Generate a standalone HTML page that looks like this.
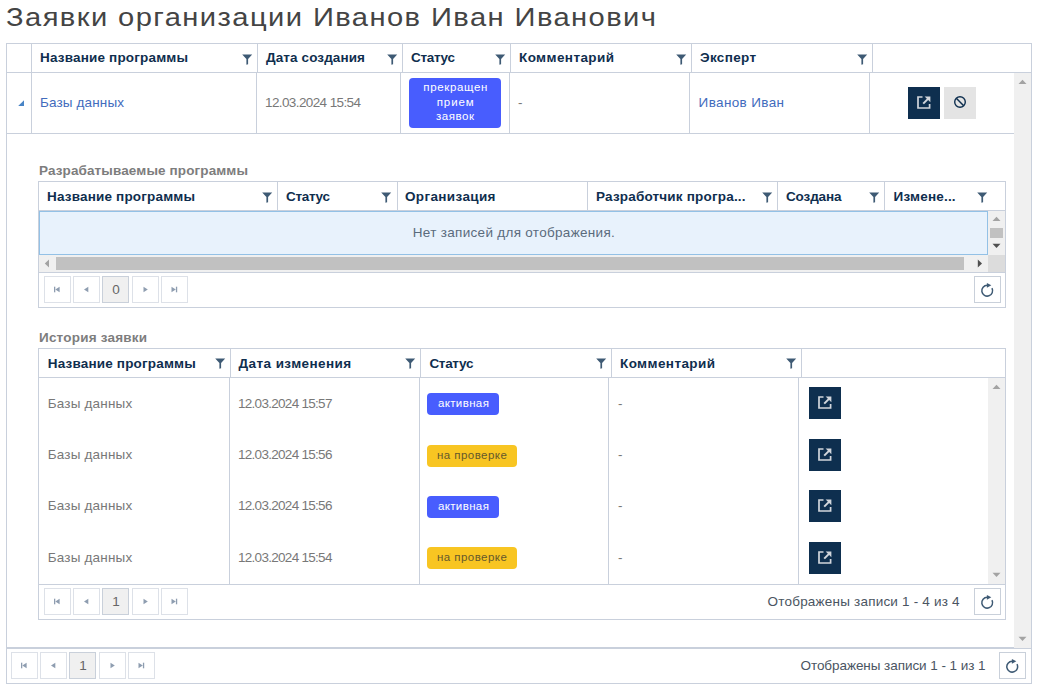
<!DOCTYPE html><html><head><meta charset="utf-8"><style>html,body{margin:0;padding:0;background:#fff;width:1041px;height:696px;overflow:hidden;position:relative;font-family:"Liberation Sans", sans-serif}
.t{position:absolute;white-space:nowrap;font-family:"Liberation Sans", sans-serif}</style></head><body><div style="position:absolute;left:6px;top:43px;width:1026px;height:641px;border:1px solid #c9d0dc;box-sizing:border-box;background:#fff"></div><div style="position:absolute;left:6px;top:72px;width:1026px;height:1px;background:#c9d0dc"></div><div style="position:absolute;left:31px;top:43px;width:1px;height:30px;background:#c9d0dc"></div><div style="position:absolute;left:257px;top:43px;width:1px;height:30px;background:#c9d0dc"></div><div style="position:absolute;left:402px;top:43px;width:1px;height:30px;background:#c9d0dc"></div><div style="position:absolute;left:510px;top:43px;width:1px;height:30px;background:#c9d0dc"></div><div style="position:absolute;left:691px;top:43px;width:1px;height:30px;background:#c9d0dc"></div><div style="position:absolute;left:872px;top:43px;width:1px;height:30px;background:#c9d0dc"></div><svg style="position:absolute;left:242px;top:53.6px" width="11" height="11" viewBox="0 0 11 11"><path d="M0.2 0.4 H10.2 L6.1 4.9 V10.2 L4.4 10.8 V4.9 Z" fill="#3e5a74"/></svg><svg style="position:absolute;left:495px;top:53.6px" width="11" height="11" viewBox="0 0 11 11"><path d="M0.2 0.4 H10.2 L6.1 4.9 V10.2 L4.4 10.8 V4.9 Z" fill="#3e5a74"/></svg><svg style="position:absolute;left:676px;top:53.6px" width="11" height="11" viewBox="0 0 11 11"><path d="M0.2 0.4 H10.2 L6.1 4.9 V10.2 L4.4 10.8 V4.9 Z" fill="#3e5a74"/></svg><svg style="position:absolute;left:857px;top:53.6px" width="11" height="11" viewBox="0 0 11 11"><path d="M0.2 0.4 H10.2 L6.1 4.9 V10.2 L4.4 10.8 V4.9 Z" fill="#3e5a74"/></svg><svg style="position:absolute;left:387px;top:53.6px" width="11" height="11" viewBox="0 0 11 11"><path d="M0.2 0.4 H10.2 L6.1 4.9 V10.2 L4.4 10.8 V4.9 Z" fill="#3e5a74"/></svg><div style="position:absolute;left:1014px;top:73px;width:17px;height:575px;background:#f0f0f0"></div><svg style="position:absolute;left:1018px;top:79px" width="9" height="6"><path d="M0.5 5 L4.5 0.8 L8.5 5 Z" fill="#a3a3a3"/></svg><svg style="position:absolute;left:1018px;top:636px" width="9" height="6"><path d="M0.5 0.8 L4.5 5 L8.5 0.8 Z" fill="#a3a3a3"/></svg><div style="position:absolute;left:31px;top:73px;width:1px;height:61px;background:#c9d0dc"></div><div style="position:absolute;left:256px;top:73px;width:1px;height:61px;background:#c9d0dc"></div><div style="position:absolute;left:400px;top:73px;width:1px;height:61px;background:#c9d0dc"></div><div style="position:absolute;left:509px;top:73px;width:1px;height:61px;background:#c9d0dc"></div><div style="position:absolute;left:689px;top:73px;width:1px;height:61px;background:#c9d0dc"></div><div style="position:absolute;left:869px;top:73px;width:1px;height:61px;background:#c9d0dc"></div><div style="position:absolute;left:6px;top:133px;width:1008px;height:1px;background:#c9d0dc"></div><svg style="position:absolute;left:18px;top:100px" width="7" height="7"><path d="M6 0.2 V6 H0.2 Z" fill="#4884c6"/></svg><div style="position:absolute;left:409px;top:78px;width:92px;height:50px;background:#485dfe;border-radius:4px"></div><div style="position:absolute;left:908px;top:87px;width:32px;height:32px;background:#0e2f4f"></div><svg style="position:absolute;left:908px;top:87px" width="32" height="32" viewBox="0 0 32 32"><path d="M14.5 10.0 H10 V21.0 H21.6 V17" fill="none" stroke="#d2d6dc" stroke-width="1.7"/><path d="M15.2 16.6 L20.2 11.6" stroke="#d2d6dc" stroke-width="2"/><path d="M16.6 9.4 H22.4 V15.2 Z" fill="#d2d6dc"/></svg><div style="position:absolute;left:944px;top:87px;width:32px;height:32px;background:#e4e4e4"></div><svg style="position:absolute;left:944px;top:87px" width="32" height="32" viewBox="0 0 32 32"><circle cx="16" cy="15" r="5.3" fill="none" stroke="#0e2f4f" stroke-width="1.4"/><path d="M12.3 11.3 L19.7 18.7" stroke="#0e2f4f" stroke-width="1.5"/></svg><div style="position:absolute;left:38px;top:181px;width:968px;height:127px;border:1px solid #c9d0dc;box-sizing:border-box;background:#fff"></div><div style="position:absolute;left:277px;top:181px;width:1px;height:30px;background:#c9d0dc"></div><div style="position:absolute;left:397px;top:181px;width:1px;height:30px;background:#c9d0dc"></div><div style="position:absolute;left:587px;top:181px;width:1px;height:30px;background:#c9d0dc"></div><div style="position:absolute;left:777px;top:181px;width:1px;height:30px;background:#c9d0dc"></div><div style="position:absolute;left:884px;top:181px;width:1px;height:30px;background:#c9d0dc"></div><div style="position:absolute;left:38px;top:210px;width:968px;height:1px;background:#c9d0dc"></div><svg style="position:absolute;left:262px;top:192px" width="11" height="11" viewBox="0 0 11 11"><path d="M0.2 0.4 H10.2 L6.1 4.9 V10.2 L4.4 10.8 V4.9 Z" fill="#3e5a74"/></svg><svg style="position:absolute;left:381px;top:192px" width="11" height="11" viewBox="0 0 11 11"><path d="M0.2 0.4 H10.2 L6.1 4.9 V10.2 L4.4 10.8 V4.9 Z" fill="#3e5a74"/></svg><svg style="position:absolute;left:762px;top:192px" width="11" height="11" viewBox="0 0 11 11"><path d="M0.2 0.4 H10.2 L6.1 4.9 V10.2 L4.4 10.8 V4.9 Z" fill="#3e5a74"/></svg><svg style="position:absolute;left:869px;top:192px" width="11" height="11" viewBox="0 0 11 11"><path d="M0.2 0.4 H10.2 L6.1 4.9 V10.2 L4.4 10.8 V4.9 Z" fill="#3e5a74"/></svg><svg style="position:absolute;left:977px;top:192px" width="11" height="11" viewBox="0 0 11 11"><path d="M0.2 0.4 H10.2 L6.1 4.9 V10.2 L4.4 10.8 V4.9 Z" fill="#3e5a74"/></svg><div style="position:absolute;left:39px;top:211px;width:949px;height:44px;background:#e8f2fc;border:1px solid #93c1e6;box-sizing:border-box"></div><div style="position:absolute;left:988px;top:211px;width:17px;height:44px;background:#f0f0f0"></div><svg style="position:absolute;left:992px;top:216px" width="9" height="6"><path d="M0.5 5 L4.5 0.8 L8.5 5 Z" fill="#a3a3a3"/></svg><div style="position:absolute;left:990px;top:228px;width:13px;height:10px;background:#c1c1c1"></div><svg style="position:absolute;left:992px;top:243.2px" width="9" height="6"><path d="M0.5 0.8 L4.5 5 L8.5 0.8 Z" fill="#505050"/></svg><div style="position:absolute;left:39px;top:255px;width:949px;height:17px;background:#f0f0f0"></div><div style="position:absolute;left:56px;top:257px;width:908px;height:13px;background:#c1c1c1"></div><svg style="position:absolute;left:44px;top:259px" width="6" height="9"><path d="M5 0.5 L0.8 4.5 L5 8.5 Z" fill="#a3a3a3"/></svg><svg style="position:absolute;left:977.2px;top:259px" width="6" height="9"><path d="M0.8 0.5 L5 4.5 L0.8 8.5 Z" fill="#505050"/></svg><div style="position:absolute;left:988px;top:255px;width:17px;height:17px;background:#dcdcdc"></div><div style="position:absolute;left:38px;top:272px;width:968px;height:1px;background:#c9d0dc"></div><div style="position:absolute;left:44px;top:276px;width:27px;height:27px;background:#fff;border:1px solid #dde1e8;box-sizing:border-box"></div><div style="position:absolute;left:73px;top:276px;width:27px;height:27px;background:#fff;border:1px solid #dde1e8;box-sizing:border-box"></div><div style="position:absolute;left:102px;top:276px;width:27px;height:27px;background:#f0f0f0;border:1px solid #c9d0da;box-sizing:border-box"></div><div style="position:absolute;left:132px;top:276px;width:27px;height:27px;background:#fff;border:1px solid #dde1e8;box-sizing:border-box"></div><div style="position:absolute;left:161px;top:276px;width:27px;height:27px;background:#fff;border:1px solid #dde1e8;box-sizing:border-box"></div><svg style="position:absolute;left:44px;top:276px" width="27" height="27"><rect x="10" y="10.7" width="1.3" height="5.6" fill="#8e9db0"/><path d="M11.3 13.5 L15.6 10.7 V16.3 Z" fill="#8e9db0"/></svg><svg style="position:absolute;left:73px;top:276px" width="27" height="27"><path d="M11 13.5 L15.3 10.7 V16.3 Z" fill="#8e9db0"/></svg><svg style="position:absolute;left:132px;top:276px" width="27" height="27"><path d="M15.8 13.5 L11.5 10.7 V16.3 Z" fill="#8e9db0"/></svg><svg style="position:absolute;left:161px;top:276px" width="27" height="27"><path d="M14.8 13.5 L10.5 10.7 V16.3 Z" fill="#8e9db0"/><rect x="14.9" y="10.7" width="1.3" height="5.6" fill="#8e9db0"/></svg><div style="position:absolute;left:974px;top:276px;width:27px;height:27px;background:#fff;border:1px solid #c9d0da;box-sizing:border-box"></div><svg style="position:absolute;left:974px;top:276px" width="27" height="27" viewBox="0 0 27 27"><path d="M13.2 9.3 A5.4 5.4 0 1 0 17.97 12.16" fill="none" stroke="#3e5a74" stroke-width="1.5"/><path d="M12.9 7.0 L17.3 9.35 L12.9 11.7 Z" fill="#3e5a74"/></svg><div style="position:absolute;left:38px;top:348px;width:968px;height:272px;border:1px solid #c9d0dc;box-sizing:border-box;background:#fff"></div><div style="position:absolute;left:230px;top:348px;width:1px;height:30px;background:#c9d0dc"></div><div style="position:absolute;left:420px;top:348px;width:1px;height:30px;background:#c9d0dc"></div><div style="position:absolute;left:611px;top:348px;width:1px;height:30px;background:#c9d0dc"></div><div style="position:absolute;left:801px;top:348px;width:1px;height:30px;background:#c9d0dc"></div><div style="position:absolute;left:38px;top:377px;width:968px;height:1px;background:#c9d0dc"></div><svg style="position:absolute;left:215px;top:358px" width="11" height="11" viewBox="0 0 11 11"><path d="M0.2 0.4 H10.2 L6.1 4.9 V10.2 L4.4 10.8 V4.9 Z" fill="#3e5a74"/></svg><svg style="position:absolute;left:405px;top:358px" width="11" height="11" viewBox="0 0 11 11"><path d="M0.2 0.4 H10.2 L6.1 4.9 V10.2 L4.4 10.8 V4.9 Z" fill="#3e5a74"/></svg><svg style="position:absolute;left:596px;top:358px" width="11" height="11" viewBox="0 0 11 11"><path d="M0.2 0.4 H10.2 L6.1 4.9 V10.2 L4.4 10.8 V4.9 Z" fill="#3e5a74"/></svg><svg style="position:absolute;left:786px;top:358px" width="11" height="11" viewBox="0 0 11 11"><path d="M0.2 0.4 H10.2 L6.1 4.9 V10.2 L4.4 10.8 V4.9 Z" fill="#3e5a74"/></svg><div style="position:absolute;left:229px;top:378px;width:1px;height:206px;background:#c9d0dc"></div><div style="position:absolute;left:419px;top:378px;width:1px;height:206px;background:#c9d0dc"></div><div style="position:absolute;left:608px;top:378px;width:1px;height:206px;background:#c9d0dc"></div><div style="position:absolute;left:798px;top:378px;width:1px;height:206px;background:#c9d0dc"></div><div style="position:absolute;left:988px;top:378px;width:17px;height:206px;background:#f0f0f0"></div><svg style="position:absolute;left:992px;top:384px" width="9" height="6"><path d="M0.5 5 L4.5 0.8 L8.5 5 Z" fill="#a3a3a3"/></svg><svg style="position:absolute;left:992px;top:572px" width="9" height="6"><path d="M0.5 0.8 L4.5 5 L8.5 0.8 Z" fill="#a3a3a3"/></svg><div style="position:absolute;left:427px;top:393px;width:72px;height:22px;background:#485dfe;border-radius:4px"></div><div style="position:absolute;left:809px;top:387px;width:32px;height:32px;background:#0e2f4f"></div><svg style="position:absolute;left:809px;top:387px" width="32" height="32" viewBox="0 0 32 32"><path d="M14.5 10.0 H10 V21.0 H21.6 V17" fill="none" stroke="#d2d6dc" stroke-width="1.7"/><path d="M15.2 16.6 L20.2 11.6" stroke="#d2d6dc" stroke-width="2"/><path d="M16.6 9.4 H22.4 V15.2 Z" fill="#d2d6dc"/></svg><div style="position:absolute;left:427px;top:445px;width:90px;height:22px;background:#f8c522;border-radius:4px"></div><div style="position:absolute;left:809px;top:439px;width:32px;height:32px;background:#0e2f4f"></div><svg style="position:absolute;left:809px;top:439px" width="32" height="32" viewBox="0 0 32 32"><path d="M14.5 10.0 H10 V21.0 H21.6 V17" fill="none" stroke="#d2d6dc" stroke-width="1.7"/><path d="M15.2 16.6 L20.2 11.6" stroke="#d2d6dc" stroke-width="2"/><path d="M16.6 9.4 H22.4 V15.2 Z" fill="#d2d6dc"/></svg><div style="position:absolute;left:427px;top:496px;width:72px;height:22px;background:#485dfe;border-radius:4px"></div><div style="position:absolute;left:809px;top:490px;width:32px;height:32px;background:#0e2f4f"></div><svg style="position:absolute;left:809px;top:490px" width="32" height="32" viewBox="0 0 32 32"><path d="M14.5 10.0 H10 V21.0 H21.6 V17" fill="none" stroke="#d2d6dc" stroke-width="1.7"/><path d="M15.2 16.6 L20.2 11.6" stroke="#d2d6dc" stroke-width="2"/><path d="M16.6 9.4 H22.4 V15.2 Z" fill="#d2d6dc"/></svg><div style="position:absolute;left:427px;top:547px;width:90px;height:22px;background:#f8c522;border-radius:4px"></div><div style="position:absolute;left:809px;top:542px;width:32px;height:32px;background:#0e2f4f"></div><svg style="position:absolute;left:809px;top:542px" width="32" height="32" viewBox="0 0 32 32"><path d="M14.5 10.0 H10 V21.0 H21.6 V17" fill="none" stroke="#d2d6dc" stroke-width="1.7"/><path d="M15.2 16.6 L20.2 11.6" stroke="#d2d6dc" stroke-width="2"/><path d="M16.6 9.4 H22.4 V15.2 Z" fill="#d2d6dc"/></svg><div style="position:absolute;left:38px;top:584px;width:968px;height:1px;background:#c9d0dc"></div><div style="position:absolute;left:44px;top:588px;width:27px;height:27px;background:#fff;border:1px solid #dde1e8;box-sizing:border-box"></div><div style="position:absolute;left:73px;top:588px;width:27px;height:27px;background:#fff;border:1px solid #dde1e8;box-sizing:border-box"></div><div style="position:absolute;left:102px;top:588px;width:27px;height:27px;background:#f0f0f0;border:1px solid #c9d0da;box-sizing:border-box"></div><div style="position:absolute;left:132px;top:588px;width:27px;height:27px;background:#fff;border:1px solid #dde1e8;box-sizing:border-box"></div><div style="position:absolute;left:161px;top:588px;width:27px;height:27px;background:#fff;border:1px solid #dde1e8;box-sizing:border-box"></div><svg style="position:absolute;left:44px;top:588px" width="27" height="27"><rect x="10" y="10.7" width="1.3" height="5.6" fill="#8e9db0"/><path d="M11.3 13.5 L15.6 10.7 V16.3 Z" fill="#8e9db0"/></svg><svg style="position:absolute;left:73px;top:588px" width="27" height="27"><path d="M11 13.5 L15.3 10.7 V16.3 Z" fill="#8e9db0"/></svg><svg style="position:absolute;left:132px;top:588px" width="27" height="27"><path d="M15.8 13.5 L11.5 10.7 V16.3 Z" fill="#8e9db0"/></svg><svg style="position:absolute;left:161px;top:588px" width="27" height="27"><path d="M14.8 13.5 L10.5 10.7 V16.3 Z" fill="#8e9db0"/><rect x="14.9" y="10.7" width="1.3" height="5.6" fill="#8e9db0"/></svg><div style="position:absolute;left:974px;top:588px;width:27px;height:27px;background:#fff;border:1px solid #c9d0da;box-sizing:border-box"></div><svg style="position:absolute;left:974px;top:588px" width="27" height="27" viewBox="0 0 27 27"><path d="M13.2 9.3 A5.4 5.4 0 1 0 17.97 12.16" fill="none" stroke="#3e5a74" stroke-width="1.5"/><path d="M12.9 7.0 L17.3 9.35 L12.9 11.7 Z" fill="#3e5a74"/></svg><div style="position:absolute;left:6px;top:647px;width:1008px;height:1px;background:#c9d0dc"></div><div style="position:absolute;left:6px;top:648px;width:1026px;height:1px;background:#c9d0dc"></div><div style="position:absolute;left:11px;top:652px;width:27px;height:27px;background:#fff;border:1px solid #dde1e8;box-sizing:border-box"></div><div style="position:absolute;left:40px;top:652px;width:27px;height:27px;background:#fff;border:1px solid #dde1e8;box-sizing:border-box"></div><div style="position:absolute;left:69px;top:652px;width:27px;height:27px;background:#f0f0f0;border:1px solid #c9d0da;box-sizing:border-box"></div><div style="position:absolute;left:99px;top:652px;width:27px;height:27px;background:#fff;border:1px solid #dde1e8;box-sizing:border-box"></div><div style="position:absolute;left:128px;top:652px;width:27px;height:27px;background:#fff;border:1px solid #dde1e8;box-sizing:border-box"></div><svg style="position:absolute;left:11px;top:652px" width="27" height="27"><rect x="10" y="10.7" width="1.3" height="5.6" fill="#8e9db0"/><path d="M11.3 13.5 L15.6 10.7 V16.3 Z" fill="#8e9db0"/></svg><svg style="position:absolute;left:40px;top:652px" width="27" height="27"><path d="M11 13.5 L15.3 10.7 V16.3 Z" fill="#8e9db0"/></svg><svg style="position:absolute;left:99px;top:652px" width="27" height="27"><path d="M15.8 13.5 L11.5 10.7 V16.3 Z" fill="#8e9db0"/></svg><svg style="position:absolute;left:128px;top:652px" width="27" height="27"><path d="M14.8 13.5 L10.5 10.7 V16.3 Z" fill="#8e9db0"/><rect x="14.9" y="10.7" width="1.3" height="5.6" fill="#8e9db0"/></svg><div style="position:absolute;left:999px;top:652px;width:27px;height:27px;background:#fff;border:1px solid #c9d0da;box-sizing:border-box"></div><svg style="position:absolute;left:999px;top:652px" width="27" height="27" viewBox="0 0 27 27"><path d="M13.2 9.3 A5.4 5.4 0 1 0 17.97 12.16" fill="none" stroke="#3e5a74" stroke-width="1.5"/><path d="M12.9 7.0 L17.3 9.35 L12.9 11.7 Z" fill="#3e5a74"/></svg><div class="t" id="t0" style="left:6.00px;top:4.09px;font-size:26px;line-height:26px;font-weight:400;color:#444;letter-spacing:1.271px;transform:scaleX(1.12);transform-origin:0 0;">Заявки организации Иванов Иван Иванович</div><div class="t" id="t1" style="left:40.00px;top:50.97px;font-size:13.5px;line-height:13.5px;font-weight:700;color:#0f2e4e;letter-spacing:0.176px;">Название программы</div><div class="t" id="t2" style="left:266.00px;top:50.97px;font-size:13.5px;line-height:13.5px;font-weight:700;color:#0f2e4e;letter-spacing:0.108px;">Дата создания</div><div class="t" id="t3" style="left:411.00px;top:50.97px;font-size:13.5px;line-height:13.5px;font-weight:700;color:#0f2e4e;letter-spacing:-0.300px;">Статус</div><div class="t" id="t4" style="left:519.00px;top:50.97px;font-size:13.5px;line-height:13.5px;font-weight:700;color:#0f2e4e;letter-spacing:0.408px;">Комментарий</div><div class="t" id="t5" style="left:700.00px;top:50.97px;font-size:13.5px;line-height:13.5px;font-weight:700;color:#0f2e4e;letter-spacing:0.326px;">Эксперт</div><div class="t" id="t6" style="left:40.00px;top:95.97px;font-size:13.5px;line-height:13.5px;font-weight:400;color:#426cbd;letter-spacing:0.139px;">Базы данных</div><div class="t" id="t7" style="left:265.00px;top:95.97px;font-size:13.5px;line-height:13.5px;font-weight:400;color:#787878;letter-spacing:-0.607px;">12.03.2024 15:54</div><div class="t" id="t8" style="left:423.30px;top:82.17px;font-size:11.5px;line-height:11.5px;font-weight:400;color:#fff;letter-spacing:0.635px;">прекращен</div><div class="t" id="t9" style="left:436.70px;top:96.87px;font-size:11.5px;line-height:11.5px;font-weight:400;color:#fff;letter-spacing:0.910px;">прием</div><div class="t" id="t10" style="left:436.00px;top:110.97px;font-size:11.5px;line-height:11.5px;font-weight:400;color:#fff;letter-spacing:0.537px;">заявок</div><div class="t" id="t11" style="left:518.00px;top:95.57px;font-size:13.5px;line-height:13.5px;font-weight:400;color:#787878;">-</div><div class="t" id="t12" style="left:698.60px;top:95.97px;font-size:13.5px;line-height:13.5px;font-weight:400;color:#426cbd;letter-spacing:0.359px;">Иванов Иван</div><div class="t" id="t13" style="left:39.00px;top:163.57px;font-size:13.5px;line-height:13.5px;font-weight:700;color:#7d7d7d;letter-spacing:0.116px;">Разрабатываемые программы</div><div class="t" id="t14" style="left:47.00px;top:189.57px;font-size:13.5px;line-height:13.5px;font-weight:700;color:#0f2e4e;letter-spacing:0.176px;">Название программы</div><div class="t" id="t15" style="left:286.00px;top:189.57px;font-size:13.5px;line-height:13.5px;font-weight:700;color:#0f2e4e;letter-spacing:-0.300px;">Статус</div><div class="t" id="t16" style="left:405.00px;top:189.57px;font-size:13.5px;line-height:13.5px;font-weight:700;color:#0f2e4e;letter-spacing:0.364px;">Организация</div><div class="t" id="t17" style="left:596.00px;top:189.57px;font-size:13.5px;line-height:13.5px;font-weight:700;color:#0f2e4e;letter-spacing:0.188px;">Разработчик програ...</div><div class="t" id="t18" style="left:786.00px;top:189.57px;font-size:13.5px;line-height:13.5px;font-weight:700;color:#0f2e4e;letter-spacing:-0.130px;">Создана</div><div class="t" id="t19" style="left:893.60px;top:189.57px;font-size:13.5px;line-height:13.5px;font-weight:700;color:#0f2e4e;letter-spacing:0.188px;">Измене...</div><div class="t" id="t20" style="left:412.80px;top:225.67px;font-size:13.5px;line-height:13.5px;font-weight:400;color:#5a6b7c;letter-spacing:0.305px;">Нет записей для отображения.</div><div class="t" id="t21" style="left:112.20px;top:282.57px;font-size:13.5px;line-height:13.5px;font-weight:400;color:#666;">0</div><div class="t" id="t22" style="left:39.00px;top:330.57px;font-size:13.5px;line-height:13.5px;font-weight:700;color:#7d7d7d;letter-spacing:0.204px;">История заявки</div><div class="t" id="t23" style="left:47.75px;top:357.17px;font-size:13.5px;line-height:13.5px;font-weight:700;color:#0f2e4e;letter-spacing:0.176px;">Название программы</div><div class="t" id="t24" style="left:238.60px;top:357.17px;font-size:13.5px;line-height:13.5px;font-weight:700;color:#0f2e4e;letter-spacing:0.411px;">Дата изменения</div><div class="t" id="t25" style="left:429.40px;top:357.17px;font-size:13.5px;line-height:13.5px;font-weight:700;color:#0f2e4e;letter-spacing:-0.300px;">Статус</div><div class="t" id="t26" style="left:620.00px;top:357.17px;font-size:13.5px;line-height:13.5px;font-weight:700;color:#0f2e4e;letter-spacing:0.408px;">Комментарий</div><div class="t" id="t27" style="left:47.75px;top:397.01px;font-size:13.5px;line-height:13.5px;font-weight:400;color:#787878;letter-spacing:0.189px;">Базы данных</div><div class="t" id="t28" style="left:238.00px;top:397.01px;font-size:13.5px;line-height:13.5px;font-weight:400;color:#787878;letter-spacing:-0.714px;">12.03.2024 15:57</div><div class="t" id="t29" style="left:618.00px;top:397.01px;font-size:13.5px;line-height:13.5px;font-weight:400;color:#787878;">-</div><div class="t" id="t30" style="left:437.90px;top:398.01px;font-size:11.5px;line-height:11.5px;font-weight:400;color:#fff;letter-spacing:0.379px;">активная</div><div class="t" id="t31" style="left:47.75px;top:448.01px;font-size:13.5px;line-height:13.5px;font-weight:400;color:#787878;letter-spacing:0.189px;">Базы данных</div><div class="t" id="t32" style="left:238.00px;top:448.01px;font-size:13.5px;line-height:13.5px;font-weight:400;color:#787878;letter-spacing:-0.714px;">12.03.2024 15:56</div><div class="t" id="t33" style="left:618.00px;top:448.01px;font-size:13.5px;line-height:13.5px;font-weight:400;color:#787878;">-</div><div class="t" id="t34" style="left:436.90px;top:450.01px;font-size:11.5px;line-height:11.5px;font-weight:400;color:#65582c;letter-spacing:0.470px;">на проверке</div><div class="t" id="t35" style="left:47.75px;top:499.01px;font-size:13.5px;line-height:13.5px;font-weight:400;color:#787878;letter-spacing:0.189px;">Базы данных</div><div class="t" id="t36" style="left:238.00px;top:499.01px;font-size:13.5px;line-height:13.5px;font-weight:400;color:#787878;letter-spacing:-0.714px;">12.03.2024 15:56</div><div class="t" id="t37" style="left:618.00px;top:499.01px;font-size:13.5px;line-height:13.5px;font-weight:400;color:#787878;">-</div><div class="t" id="t38" style="left:437.90px;top:501.01px;font-size:11.5px;line-height:11.5px;font-weight:400;color:#fff;letter-spacing:0.379px;">активная</div><div class="t" id="t39" style="left:47.75px;top:551.01px;font-size:13.5px;line-height:13.5px;font-weight:400;color:#787878;letter-spacing:0.189px;">Базы данных</div><div class="t" id="t40" style="left:238.00px;top:551.01px;font-size:13.5px;line-height:13.5px;font-weight:400;color:#787878;letter-spacing:-0.714px;">12.03.2024 15:54</div><div class="t" id="t41" style="left:618.00px;top:551.01px;font-size:13.5px;line-height:13.5px;font-weight:400;color:#787878;">-</div><div class="t" id="t42" style="left:436.90px;top:552.01px;font-size:11.5px;line-height:11.5px;font-weight:400;color:#65582c;letter-spacing:0.470px;">на проверке</div><div class="t" id="t43" style="left:112.20px;top:594.57px;font-size:13.5px;line-height:13.5px;font-weight:400;color:#666;">1</div><div class="t" id="t44" style="left:767.60px;top:594.97px;font-size:13.5px;line-height:13.5px;font-weight:400;color:#4a5562;letter-spacing:0.200px;">Отображены записи 1 - 4 из 4</div><div class="t" id="t45" style="left:79.20px;top:658.57px;font-size:13.5px;line-height:13.5px;font-weight:400;color:#666;">1</div><div class="t" id="t46" style="left:800.50px;top:658.97px;font-size:13.5px;line-height:13.5px;font-weight:400;color:#4a5562;letter-spacing:-0.059px;">Отображены записи 1 - 1 из 1</div></body></html>
